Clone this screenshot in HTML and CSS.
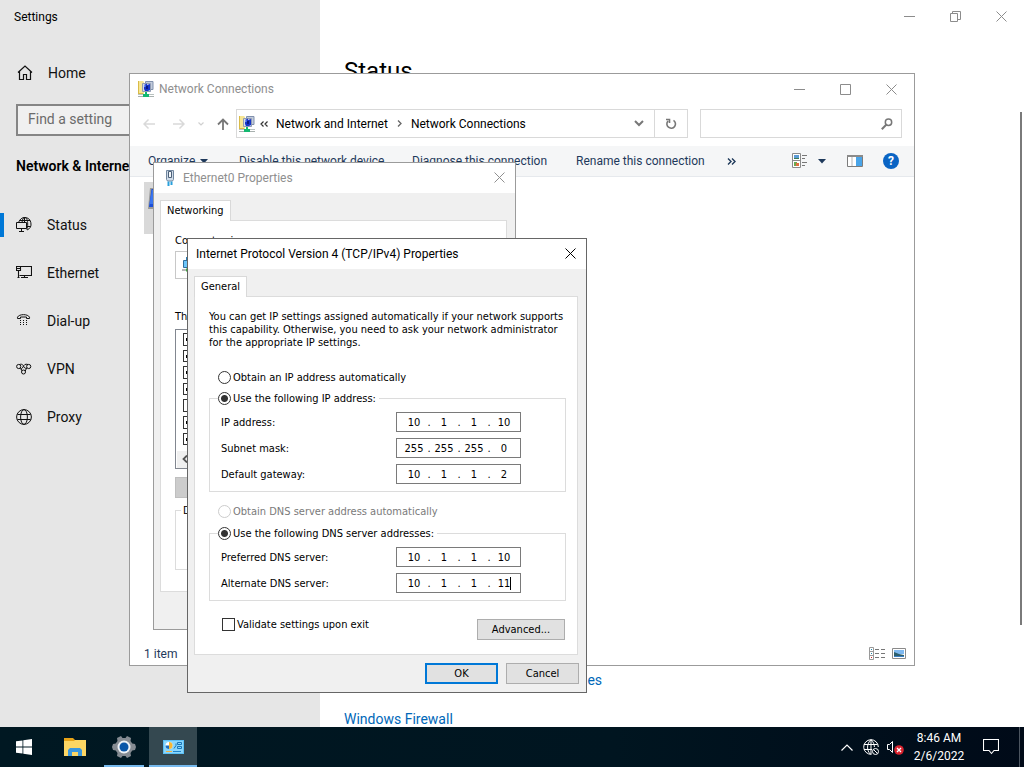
FILE: index.html
```html
<!DOCTYPE html>
<html lang="en">
<head>
<meta charset="utf-8">
<meta name="viewport" content="width=device-width, initial-scale=1">
<title>Settings</title>
<link rel="stylesheet" href="styles.css">
</head>
<body>
<svg class="defs" aria-hidden="true">
  <symbol id="netfolder" viewBox="0 0 16 16">
    <path d="M0 0h5l1 1v13H0z" fill="#f7e694"/><path d="M0 0h1v13H0zM0 12h5v1H0z" fill="#d9bb48"/>
    <path d="M7.500.5h7.500v8H7.500z" fill="#c2cbdc" stroke="#8090ac"/>
    <path d="M4.500 2.500h8v8h-8z" fill="#d6dbe6" stroke="#8f9bb3"/>
    <path d="M6 4l3-1.500V4l3-1v6l-2 1H7L6 8z" fill="#1634cc"/><path d="M8 5h2v3H8z" fill="#0a1a80"/><path d="M6 4h1.500v2H6z" fill="#6d8ff5"/>
    <path d="M7 11h2v2h2v3H5v-3h2z" fill="#14b870"/>
    <path d="M0 13.500h5M11 13.500h5" stroke="#b9c2c0"/><path d="M0 15.500h5M11 15.500h5" stroke="#a8b0ae"/>
  </symbol>
  <symbol id="globe" viewBox="0 0 16 16">
    <g fill="none" stroke="currentColor"><circle cx="8" cy="8" r="7.400"/><ellipse cx="8" cy="8" rx="3.400" ry="7.400"/><path d="M1.400 5.500h13.200M1.400 10.500h13.200"/></g>
  </symbol>
  <symbol id="close" viewBox="0 0 11 11"><path d="M.5.500l10 10M10.500.500l-10 10" fill="none" stroke="currentColor"/></symbol>
</svg>

<div class="desktop">
  <div class="settings">
    <aside class="side">
      <div class="app-name">Settings</div>
      <a class="nav home" href="#home">
        <svg width="16" height="16" viewBox="0 0 16 16"><path d="M1 7.500L8 1l7 6.500M2.500 6.500v8h4v-5h3v5h4v-8" fill="none" stroke="currentColor" stroke-width="1.200"/></svg>
        Home</a>
      <input class="find" type="text" placeholder="Find a setting" aria-label="Find a setting">
      <h2>Network &amp; Internet</h2>
      <nav>
        <a class="nav current" href="#status">
          <svg width="16" height="16" viewBox="0 0 16 16"><g fill="none" stroke="currentColor"><path d="M2.500 5.500C4 2 6 .5 8.500.5a6.500 6.500 0 0 1 2.500 12.500M6 5.500C6.300 2.500 7.300.5 8.700.5c2 0 3 3 3 6.500 0 2.500-.3 4-1 5.500M3.500 3.500h10.500M11 9.500h3.500M8.500.5v5"/><path d="M.5 5.500h10v6H.5zM5.500 11.500v3M3 14.500h5"/></g></svg>
          Status</a>
        <a class="nav" href="#ethernet">
          <svg width="16" height="16" viewBox="0 0 16 16"><path d="M4.500 1.500h11v9h-12M.5 1.500h4v4h-4zM2.500 5.500v7M1 3.500h3M8.500 10.500v2M5 12.500h7M1.500 12.500h2" fill="none" stroke="currentColor" stroke-width="1.100"/></svg>
          Ethernet</a>
        <a class="nav" href="#dialup">
          <svg width="16" height="16" viewBox="0 0 16 16"><path d="M1.500 5.500V4.200C3 .8 12 .8 13.500 4.200v1.300h-3V4h-6v1.500z" fill="none" stroke="currentColor"/><path d="M4 7.500h1M7 7.500h1M10 7.500h1M4 9.500h1M7 9.500h1M10 9.500h1M4 11.500h1M7 11.500h1M10 11.500h1" stroke="currentColor"/></svg>
          Dial-up</a>
        <a class="nav" href="#vpn">
          <svg width="16" height="16" viewBox="0 0 16 16"><g fill="none" stroke="currentColor"><circle cx="2.700" cy="5.500" r="2.100"/><circle cx="12.700" cy="5.500" r="2.100"/><circle cx="7.500" cy="11" r="2"/><path d="M3.500 3.500c3.500-1 3.500 1 4.500 2.500s2 1.500 3 1M12 3.500c-3-1-4 .5-5 2.500S5 8 3.500 7.500M5 7.500l.8 2.300M10.500 7l-1.200 3"/></g></svg>
          VPN</a>
        <a class="nav" href="#proxy"><svg width="16" height="16"><use href="#globe"/></svg>Proxy</a>
      </nav>
    </aside>
    <main class="content">
      <div class="captions">
        <button aria-label="Minimize"><svg width="11" height="11" viewBox="0 0 11 11"><path d="M0 5.500h11" stroke="currentColor"/></svg></button>
        <button aria-label="Restore"><svg width="11" height="11" viewBox="0 0 11 11"><path d="M.5 2.500h7v8h-7zM2.500 2.500v-2h8v8h-3" fill="none" stroke="currentColor"/></svg></button>
        <button aria-label="Close"><svg width="11" height="11"><use href="#close"/></svg></button>
      </div>
      <h1>Status</h1>
      <div class="links">
        <a href="#hardware">View hardware and connection properties</a>
        <a href="#firewall">Windows Firewall</a>
      </div>
      <div class="scroll"></div>
    </main>
  </div>

  <section class="window explorer" aria-label="Network Connections">
    <header class="titlebar">
      <svg width="16" height="16"><use href="#netfolder"/></svg>
      <span class="title">Network Connections</span>
      <div class="captions">
        <button aria-label="Minimize"><svg width="11" height="11" viewBox="0 0 11 11"><path d="M0 5.500h11" stroke="currentColor"/></svg></button>
        <button aria-label="Maximize"><svg width="11" height="11" viewBox="0 0 11 11"><path d="M.5.500h10v10H.5z" fill="none" stroke="currentColor"/></svg></button>
        <button aria-label="Close"><svg width="11" height="11"><use href="#close"/></svg></button>
      </div>
    </header>
    <div class="addressrow">
      <div class="arrows">
        <svg width="12" height="12" viewBox="0 0 12 12"><path d="M12 6H1M5.500 1.500L1 6l4.500 4.500" fill="none" stroke="#d9d9d9" stroke-width="1.500"/></svg>
        <svg width="12" height="12" viewBox="0 0 12 12"><path d="M0 6h11M6.500 1.500L11 6l-4.500 4.500" fill="none" stroke="#d9d9d9" stroke-width="1.500"/></svg>
        <svg width="6" height="4" viewBox="0 0 6 4"><path d="M.5.500L3 3 5.500.500" fill="none" stroke="#d0d0d0" stroke-width="1.200"/></svg>
        <svg width="12" height="12" viewBox="0 0 12 12"><path d="M6 12V1.500M1 6.500l5-5 5 5" fill="none" stroke="#777" stroke-width="1.800"/></svg>
      </div>
      <div class="address">
        <svg width="16" height="16"><use href="#netfolder"/></svg>
        <svg width="8" height="6" viewBox="0 0 8 6"><path d="M3.500.500L1 3l2.500 2.500M7.500.500L5 3l2.500 2.500" fill="none" stroke="#333" stroke-width="1.200"/></svg>
        <span>Network and Internet</span>
        <svg class="sep" width="5" height="7" viewBox="0 0 5 7"><path d="M1 .5l3 3-3 3" fill="none" stroke="#666" stroke-width="1.300"/></svg>
        <span>Network Connections</span>
        <svg class="drop" width="10" height="7" viewBox="0 0 10 7"><path d="M1 1l4 4 4-4" fill="none" stroke="#777" stroke-width="2"/></svg>
        <button class="refresh" aria-label="Refresh"><svg width="12" height="12" viewBox="0 0 12 12"><path d="M8.500 2.300A4.300 4.300 0 1 1 3 3M1 1.500h3.500V5" fill="none" stroke="#777" stroke-width="1.600"/></svg></button>
      </div>
      <div class="search">
        <input type="text" aria-label="Search Network Connections">
        <svg width="12" height="12" viewBox="0 0 12 12"><circle cx="7.500" cy="4.300" r="3.200" fill="none" stroke="#777" stroke-width="1.500"/><path d="M5.200 6.800L.8 11.200" stroke="#777" stroke-width="2"/></svg>
      </div>
    </div>
    <div class="toolbar">
      <button class="t1">Organize <svg width="8" height="5" viewBox="0 0 8 5"><path d="M0 0h8L4 4.500z" fill="#1e395b"/></svg></button>
      <button class="t2">Disable this network device</button>
      <button class="t3">Diagnose this connection</button>
      <button class="t4">Rename this connection</button>
      <button aria-label="More commands"><svg width="9" height="7" viewBox="0 0 9 7"><path d="M1 .5l3 3-3 3M5 .5l3 3-3 3" fill="none" stroke="#1e395b" stroke-width="1.400"/></svg></button>
      <div class="views">
        <button aria-label="View"><svg width="16" height="16" viewBox="0 0 16 16"><path d="M.5.500h8v14h-8zM.5 7.500h8" fill="#fff" stroke="#8a8a8a"/><path d="M2 2h5v4H2z" fill="#5a9bd5"/><path d="M2 5h5v1H2z" fill="#3b7b55"/><path d="M2 9h3v4H2z" fill="#6aa84f"/><path d="M4 10h3v3H4z" fill="#e07040"/><path d="M10 2.500h5M10 5.500h3M10 9.500h5M10 12.500h3" stroke="#777"/></svg></button>
        <button aria-label="More view options"><svg width="8" height="5" viewBox="0 0 8 5"><path d="M0 0h8L4 4.500z" fill="#1e395b"/></svg></button>
        <button class="pane" aria-label="Show the preview pane"><svg width="16" height="12" viewBox="0 0 16 12"><path d="M.5.500h15v11H.5z" fill="#fff" stroke="#7c7c7c"/><path d="M0 0h16v2H0z" fill="#8b8b8b"/><path d="M9 2h6v9H9z" fill="#49a4e8"/><path d="M5 2v9" stroke="#b5b5b5"/></svg></button>
        <button aria-label="Help"><span class="help">?</span></button>
      </div>
    </div>
    <div class="files"><div class="file"><svg width="34" height="26" viewBox="0 0 34 26"><path d="M2 1h30v21H0z" fill="#9a9a9a"/><path d="M3.500 2H30v18H1z" fill="#1c4fd8"/><path d="M4 3h5L7 17H1.500z" fill="#3a76ef"/></svg></div></div>
    <footer class="statusbar">
      <span>1 item</span>
      <svg width="16" height="13" viewBox="0 0 16 13"><path d="M.5.500h4v12h-4zM.5 4.500h4M.5 8.500h4" fill="#fff" stroke="#999"/><path d="M2 2.500h1M2 6.500h1" stroke="#28a"/><path d="M2 10.500h1" stroke="#c22"/><path d="M6 2.500h4M12 2.500h4M6 6.500h4M12 6.500h4M6 10.500h4M12 10.500h4" stroke="#777"/></svg>
      <svg width="14" height="11" viewBox="0 0 14 11"><path d="M.5.500h13v10H.5z" fill="#fff" stroke="#8a8a8a"/><path d="M2 2h10v4H2z" fill="#7db8f0"/><path d="M2 7V4l5 2 5 1v2H2z" fill="#2b5e6e"/><path d="M2 8h10v1H2z" fill="#3a7fc4"/></svg>
    </footer>
  </section>

  <section class="window props" aria-label="Ethernet0 Properties">
    <header class="titlebar">
      <svg width="16" height="16" viewBox="0 0 16 16"><path d="M4.500.500h7v9l-1 1.500h-5l-1-1.500z" fill="#cfdbe8" stroke="#71879f"/><path d="M6.500 1.500v6h3v-6z" fill="#f3f7fb" stroke="#4c6078"/><path d="M6.500 11.500V16M9.500 11.500V15" stroke="#29a0dc" stroke-width="2"/></svg>
      <span class="title">Ethernet0 Properties</span>
      <button class="x" aria-label="Close"><svg width="11" height="11"><use href="#close"/></svg></button>
    </header>
    <div class="tabs"><button class="tab">Networking</button></div>
    <div class="sheet">
      <p class="using">Connect using:</p>
      <div class="adapter"><svg width="16" height="16" viewBox="0 0 16 16"><path d="M4 1h10v8H4z" fill="#2b7fb8"/><path d="M1.500 4.500h9v7h-9z" fill="#6cc6fb" stroke="#2d6f9e"/><path d="M0 14h4" stroke="#b5b5b5" stroke-width="2"/><path d="M4 14h8" stroke="#3cb53c" stroke-width="3"/></svg></div>
      <p class="uses">This connection uses the following items:</p>
      <div class="items">
        <input type="checkbox" checked aria-label="Client for Microsoft Networks">
        <input type="checkbox" checked aria-label="File and Printer Sharing">
        <input type="checkbox" checked aria-label="QoS Packet Scheduler">
        <input type="checkbox" checked aria-label="Internet Protocol Version 4">
        <input type="checkbox" aria-label="Multiplexor Protocol">
        <input type="checkbox" checked aria-label="LLDP Protocol Driver">
        <input type="checkbox" checked aria-label="Internet Protocol Version 6">
        <div class="hscroll"><svg width="6" height="8" viewBox="0 0 6 8"><path d="M5 .5L1.500 4 5 7.500" fill="none" stroke="#555" stroke-width="1.800"/></svg></div>
      </div>
      <button class="install" disabled aria-label="Install"></button>
      <fieldset class="desc"><legend>Description</legend></fieldset>
    </div>
  </section>

  <section class="window ipv4" role="dialog" aria-label="Internet Protocol Version 4 (TCP/IPv4) Properties">
    <header class="titlebar">
      <span class="title">Internet Protocol Version 4 (TCP/IPv4) Properties</span>
      <button class="x" aria-label="Close"><svg width="11" height="11"><use href="#close"/></svg></button>
    </header>
    <div class="tabs"><button class="tab">General</button></div>
    <form class="sheet">
      <p class="intro">You can get IP settings assigned automatically if your network supports<br>this capability. Otherwise, you need to ask your network administrator<br>for the appropriate IP settings.</p>
      <label class="choice"><input type="radio" name="ip">Obtain an IP address automatically</label>
      <fieldset class="group">
        <legend><label class="choice"><input type="radio" name="ip" checked>Use the following IP address:</label></legend>
        <div class="row"><label for="ip1">IP address:</label><div class="ip"><input id="ip1" value="10"><i>.</i><input value="1" aria-label="Second octet"><i>.</i><input value="1" aria-label="Third octet"><i>.</i><input value="10" aria-label="Fourth octet"></div></div>
        <div class="row"><label for="sm1">Subnet mask:</label><div class="ip"><input id="sm1" value="255"><i>.</i><input value="255" aria-label="Second octet"><i>.</i><input value="255" aria-label="Third octet"><i>.</i><input value="0" aria-label="Fourth octet"></div></div>
        <div class="row"><label for="gw1">Default gateway:</label><div class="ip"><input id="gw1" value="10"><i>.</i><input value="1" aria-label="Second octet"><i>.</i><input value="1" aria-label="Third octet"><i>.</i><input value="2" aria-label="Fourth octet"></div></div>
      </fieldset>
      <label class="choice off"><input type="radio" name="dns" disabled>Obtain DNS server address automatically</label>
      <fieldset class="group dns">
        <legend><label class="choice"><input type="radio" name="dns" checked>Use the following DNS server addresses:</label></legend>
        <div class="row"><label for="pd1">Preferred DNS server:</label><div class="ip"><input id="pd1" value="10"><i>.</i><input value="1" aria-label="Second octet"><i>.</i><input value="1" aria-label="Third octet"><i>.</i><input value="10" aria-label="Fourth octet"></div></div>
        <div class="row"><label for="ad1">Alternate DNS server:</label><div class="ip"><input id="ad1" value="10"><i>.</i><input value="1" aria-label="Second octet"><i>.</i><input value="1" aria-label="Third octet"><i>.</i><input value="11" aria-label="Fourth octet"><span class="caret"></span></div></div>
      </fieldset>
      <div class="bottom">
        <label class="check"><input type="checkbox">Validate settings upon exit</label>
        <button type="button" class="btn wide">Advanced...</button>
      </div>
    </form>
    <footer class="actions"><button class="btn default">OK</button><button class="btn">Cancel</button></footer>
  </section>
</div>

<footer class="taskbar">
  <button class="start" aria-label="Start"><svg width="16" height="16" viewBox="0 0 16 16"><path d="M0 2.300l6.500-.9v6.200H0zM7.300 1.300L16 0v7.600H7.300zM0 8.400h6.500v6.200L0 13.700zM7.300 8.400H16V16l-8.700-1.200z" fill="#fff"/></svg></button>
  <button aria-label="File Explorer"><svg width="22" height="18" viewBox="0 0 22 18"><path d="M0 0h9l2 2h11v16H0z" fill="#e8a317"/><path d="M0 3h10l1-1h11v16H0z" fill="#fdd663"/><path d="M4 18v-6l2-2h10l2 2v6h-4v-4H8v4z" fill="#3b97dd"/></svg></button>
  <button class="running" aria-label="Settings"><svg width="24" height="24" viewBox="0 0 24 24"><path d="M9 1l1.500 2h3L15 1l4 2-.5 3 1.800 2.500L23 9l1 3-1 3-2.700.5-1.800 2.500.5 3-4 2-1.500-2h-3L9 23l-4-2 .5-3-1.800-2.500L1 15l-1-3 1-3 2.700-.5L5.500 6 5 3z" fill="#858b92"/><circle cx="12" cy="12" r="6.500" fill="#eef2f6"/><circle cx="12" cy="12" r="4.500" fill="#0a57a8"/></svg></button>
  <button class="active" aria-label="Network Connections"><svg width="21" height="16" viewBox="0 0 21 16"><path d="M0 1h21v14H0z" fill="#5cc0f5"/><path d="M1 2h19v12H1z" fill="#8ad6fb"/><circle cx="6" cy="6.500" r="3.500" fill="#fff"/><path d="M6 6.500V3a3.500 3.500 0 0 1 0 7z" fill="#f7b733"/><path d="M2.500 6.500A3.500 3.500 0 0 0 6 10V6.500z" fill="#1e6fc0"/><path d="M14.500 3.500h4v2h-4zM14.500 7.500h4v2h-4zM11 9.500l2-3v-2" fill="none" stroke="#1976b8"/><path d="M3 12.500h6" stroke="#f0b040"/><path d="M10 12.500h8" stroke="#2082c8"/></svg></button>
  <div class="tray">
    <svg width="12" height="7" viewBox="0 0 12 7"><path d="M.5 6.500L6 1l5.500 5.500" fill="none" stroke="#fff" stroke-width="1.200"/></svg>
    <svg width="16" height="16" viewBox="0 0 16 16"><g fill="none" stroke="#fff"><path d="M8.500 15.300A7.300 7.300 0 1 1 15.300 8M7.500 15.300c-4-4-4-10.500.5-14.600C10.500 3 11.300 5.500 11.400 8M8 .7V15M1 5.500h13.600M1 10.500h8"/><circle cx="12.500" cy="12.500" r="3"/><path d="M10.500 10.500l4 4"/></g></svg>
    <svg width="17" height="16" viewBox="0 0 17 16"><path d="M.5 5.500h2l3-3v11l-3-3h-2z" fill="none" stroke="#fff"/><circle cx="12" cy="11" r="4.800" fill="#d9232e"/><path d="M10 9l4 4M14 9l-4 4" stroke="#fff" stroke-width="1.300"/></svg>
    <time class="clock">8:46 AM<br>2/6/2022</time>
    <svg width="16" height="16" viewBox="0 0 16 16"><path d="M.5.500h15v11H11l-2.500 3-2.500-3H.5z" fill="none" stroke="#fff" stroke-width="1.100"/></svg>
  </div>
</footer>
</body>
</html>
```
FILE: styles.css
```css
* { box-sizing: border-box; }
body {
  margin: 0;
  min-height: 100vh;
  display: flex;
  flex-direction: column;
  font: 12px/16px Roboto, "Open Sans", sans-serif;
  color: #000;
  background: #fff;
}
button, input { font: inherit; color: inherit; margin: 0; padding: 0; border: 0; background: none; border-radius: 0; }
h1, h2, p, fieldset { margin: 0; padding: 0; border: 0; font-weight: 400; }
a { text-decoration: none; color: inherit; }
svg { display: block; flex: none; }
.defs { position: absolute; width: 0; height: 0; }

.desktop { position: relative; flex: 1; display: flex; overflow: hidden; }

/* Settings app */
.settings { flex: 1; display: grid; grid-template-columns: 320px 1fr; }
.side { background: #e6e6e6; }
.app-name { padding: 9px 14px; height: 49px; }
.nav { display: flex; align-items: center; gap: 15px; height: 48px; padding-left: 16px; font-size: 14px; line-height: 20px; color: #111; }
.nav.current { box-shadow: inset 0 12px #e6e6e6, inset 0 -12px #e6e6e6, inset 4px 0 #0078d7; }
.home { padding-left: 17px; }
.find { display: block; width: 288px; height: 32px; margin: 7px 16px 20px; padding: 0 10px 2px; border: 2px solid #858585; background: #f0f0f0; font-size: 14px; }
.find::placeholder { color: #6b6b6b; opacity: 1; }
.side h2 { padding: 0 16px; margin-bottom: 25px; font-size: 14px; line-height: 20px; font-weight: 600; }
.content { position: relative; display: flex; flex-direction: column; padding-left: 24px; }
.captions { display: flex; align-self: flex-end; color: #8c8c8c; }
.captions button, .x { display: grid; place-items: center; width: 46px; height: 32px; }
.content h1 { margin-top: 21px; font-size: 24px; line-height: 36px; }
.links { display: flex; flex-direction: column; gap: 19px; margin: auto 0 -2px; font-size: 14px; line-height: 20px; color: #0067b8; }
.scroll { position: absolute; right: 2px; top: 112px; bottom: 102px; width: 2px; background: #7a7a7a; }

/* Windows on the desktop */
.window { position: absolute; display: flex; flex-direction: column; border: 1px solid #9b9b9b; background: #fff; }
.titlebar { display: flex; align-items: center; height: 30px; color: #8f8f8f; background: #fff; }
.titlebar .title { flex: 1; }
.titlebar .captions button { width: 46px; height: 30px; color: #8c8c8c; }

.explorer { left: 129px; top: 73px; right: 109px; bottom: 61px; }
.explorer .titlebar { padding-left: 8px; gap: 5px; }
.addressrow { display: flex; align-items: center; padding: 5px 12px 8px 13px; }
.arrows { display: flex; align-items: center; gap: 18px; padding-right: 7px; }
.arrows svg:nth-child(3) { margin: 0 -5px; }
.address { flex: 1; display: flex; align-items: center; height: 29px; border: 1px solid #d9d9d9; padding-left: 2px; }
.address span { padding-left: 8px; }
.address svg:nth-child(2) { margin-left: 5px; }
.address .sep { margin: 0 1px 0 9px; }
.address .drop { margin-left: auto; margin-right: 10px; }
.refresh { display: grid; place-items: center; width: 33px; height: 100%; border-left: 1px solid #d9d9d9; }
.search { display: flex; align-items: center; width: 202px; height: 29px; margin-left: 12px; padding: 0 8px; border: 1px solid #d9d9d9; }
.search input { flex: 1; min-width: 0; }
.toolbar { display: flex; align-items: center; height: 31px; padding: 0 15px 0 18px; background: #f5f6f7; border-bottom: 1px solid #e6e9ed; color: #1e395b; }
.toolbar button { display: flex; align-items: center; gap: 5px; white-space: nowrap; text-align: left; }
.t1 { width: 91px; }
.t2 { width: 173px; }
.t3 { width: 164px; }
.t4 { width: 151px; }
.views { display: flex; align-items: center; margin-left: auto; gap: 10px; }
.views .pane { margin: 0 10px 0 11px; }
.help { width: 16px; height: 16px; border-radius: 50%; background: #0a64c4; color: #fff; font-weight: 700; text-align: center; line-height: 16px; }
.files { flex: 1; padding: 5px 14px; }
.file { width: 260px; height: 52px; padding: 5px 4px; background: #d9d9d9; }
.statusbar { display: flex; align-items: center; gap: 7px; height: 24px; padding: 0 8px 0 14px; color: #1e395b; }
.statusbar span { flex: 1; padding-top: 1px; }

.props, .ipv4 { background: #f0f0f0; font: 11px/13px "DejaVu Sans Condensed", "Open Sans", sans-serif; }
.props .title, .ipv4 .title { font: 12px/16px Roboto, "Open Sans", sans-serif; }
.x { width: 31px; height: 29px; padding-bottom: 1px; }
.tabs { display: flex; padding: 7px 6px 0; }
.tab { height: 21px; padding: 0 6px 2px; margin-bottom: -1px; background: #fff; border: 1px solid #d9d9d9; border-bottom: 0; position: relative; z-index: 1; }
.sheet { margin: 0 8px 0 6px; background: #fff; border: 1px solid #dcdcdc; }

.props { left: 153px; top: 162px; width: 363px; padding-bottom: 37px; }
.props .titlebar { padding-left: 8px; gap: 5px; }
.props .sheet { padding: 13px 14px 21px; }
.adapter { height: 28px; margin: 4px 0 31px; padding: 4px 6px; border: 1px solid #c8c8c8; }
.items { display: flex; flex-direction: column; gap: 4px; height: 140px; margin: 6px 0 8px; padding: 3px 0 0 7px; border: 1px solid #828790; }
.hscroll { margin: 2px 0 0 -6px; padding: 4px 5px; height: 17px; background: #f0f0f0; }
.install { display: block; width: 90px; height: 21px; background: #ccc; border: 1px solid #bfbfbf; }
.desc { height: 66px; margin-top: 6px; border: 1px solid #dcdcdc; }
.desc legend { margin-left: 5px; padding: 0 2px; }

input[type=checkbox] { appearance: none; width: 13px; height: 13px; border: 1px solid #333; background: #fff; }
input[type=checkbox]:checked {
  background:
    linear-gradient(#000, #000) 2px 4px / 1px 3px,
    linear-gradient(#000, #000) 3px 5px / 1px 3px,
    linear-gradient(#000, #000) 4px 6px / 1px 3px,
    linear-gradient(#000, #000) 5px 5px / 1px 3px,
    linear-gradient(#000, #000) 6px 4px / 1px 3px,
    linear-gradient(#000, #000) 7px 3px / 1px 3px,
    linear-gradient(#000, #000) 8px 2px / 1px 3px;
  background-repeat: no-repeat;
}
input[type=radio] { appearance: none; width: 13px; height: 13px; border: 1px solid #333; border-radius: 50%; background: #fff; }
input[type=radio]:checked { background: radial-gradient(circle, #333 3px, #fff 4px); }
input[type=radio]:disabled { border-color: #ccc; }

.ipv4 { left: 187px; top: 238px; width: 400px; border-color: #666; }
.ipv4 .titlebar { padding-left: 8px; color: #000; }
.ipv4 .sheet { padding: 13px 11px 14px 14px; }
.intro { white-space: nowrap; margin-bottom: 22px; }
.choice, .check { display: flex; align-items: center; gap: 2px; height: 13px; white-space: nowrap; }
.sheet > .choice { margin: 0 0 8px 9px; }
.group { display: flex; flex-direction: column; gap: 6px; padding: 7px 44px 7px 11px; border: 1px solid #dcdcdc; }
.group + .choice.off { margin-top: 13px; margin-bottom: 9px; }
.group legend { margin-left: -3px; padding: 0 3px 0 0; }
.row { display: flex; align-items: center; justify-content: space-between; }
.ip { position: relative; display: flex; align-items: center; width: 125px; height: 20px; border: 1px solid #7a7a7a; padding-left: 4px; }
.ip input { width: 26px; text-align: center; }
.ip i { width: 4px; text-align: center; font-style: normal; }
.caret { position: absolute; right: 9px; top: 3px; width: 1px; height: 13px; background: #000; }
.off { color: #7a7a7a; }
.bottom { display: flex; justify-content: space-between; margin-top: 17px; padding: 0 1px 0 13px; }
.btn { width: 73px; height: 21px; background: #e1e1e1; border: 1px solid #adadad; }
.btn.wide { width: 88px; margin-top: 1px; }
.btn.default { border: 2px solid #0078d7; }
.actions { display: flex; justify-content: flex-end; gap: 8px; padding: 8px 7px; }

/* Taskbar */
.taskbar { display: flex; gap: 1px; height: 40px; background: linear-gradient(90deg, #001822, #001520 60%, #000a18); color: #fff; }
.taskbar button { display: grid; place-items: center; width: 48px; }
.taskbar .start { margin-right: 2px; }
.taskbar .running { background: linear-gradient(#76b9ed, #76b9ed) center bottom / 40px 2px no-repeat; }
.taskbar .active { background: #344850; border-bottom: 2px solid #76b9ed; padding-top: 2px; }
.tray { display: flex; align-items: center; margin-left: auto; margin-right: 4px; padding-right: 20px; gap: 8px; border-right: 1px solid #4c5560; }
.tray svg:first-child { margin-right: 2px; }
.clock { width: 54px; margin-right: 9px; text-align: center; line-height: 18px; white-space: nowrap; }
```
